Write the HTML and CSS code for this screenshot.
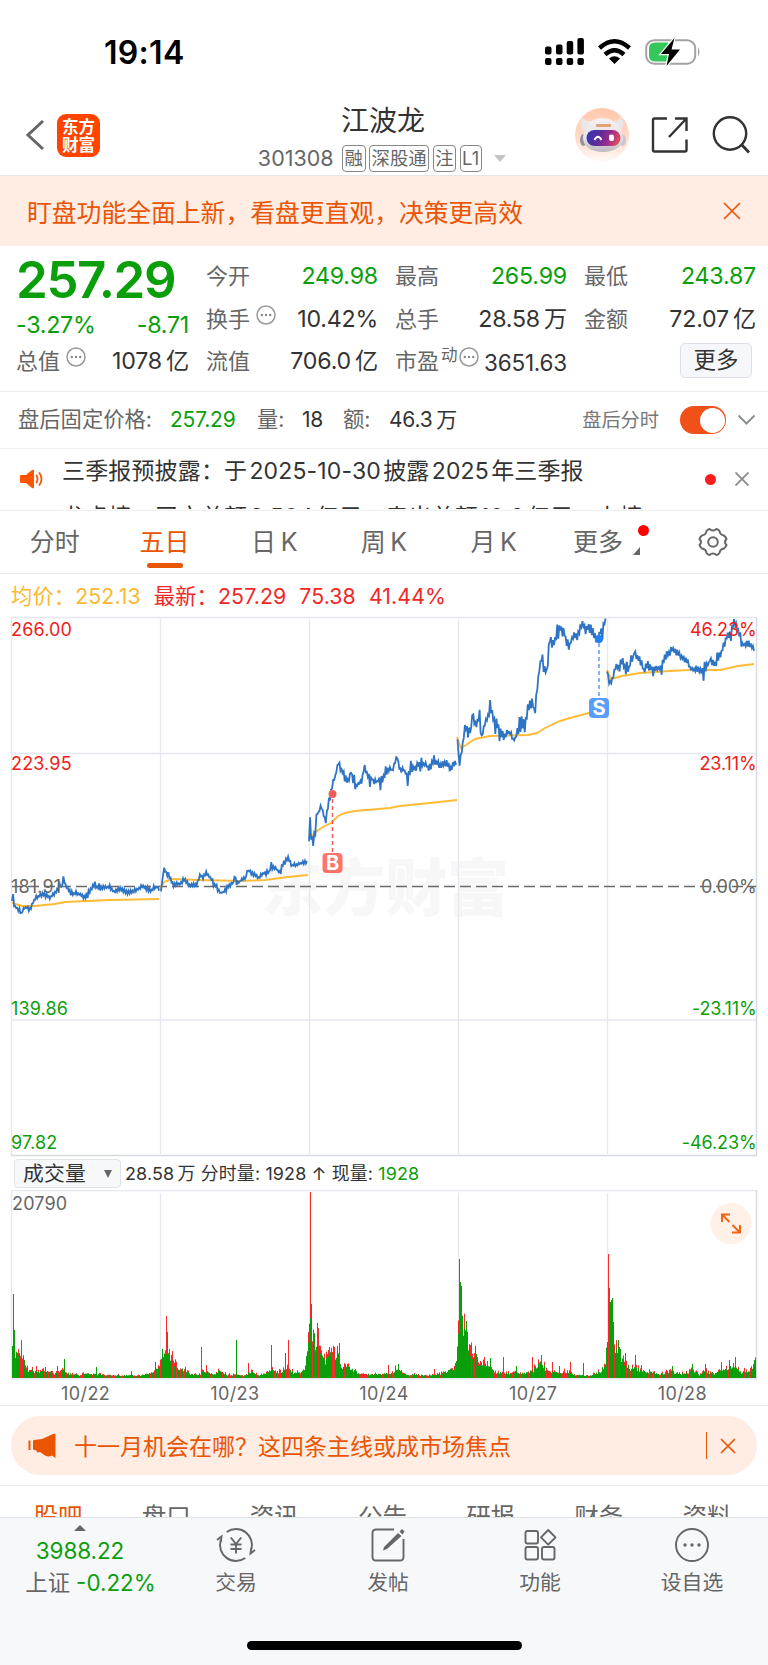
FILE: index.html
```html
<!DOCTYPE html>
<html lang="zh-CN">
<head>
    <meta charset="UTF-8">
    <meta name="viewport" content="width=device-width, initial-scale=1.0">
    <title>江波龙 301308</title>
    <link rel="stylesheet" href="styles.css">
</head>
<body>
    <div class="page">
        <div class="status-bar">
            <div class="clock">19:14</div>
            <svg class="status-icons" width="160" height="32" viewBox="542 36 160 32">
                <g fill="#000">
                    <rect x="545" y="46.500" width="6.500" height="8" rx="2"/>
                    <rect x="556" y="44.500" width="6.500" height="10" rx="2"/>
                    <rect x="566.700" y="41" width="6.500" height="13.500" rx="2"/>
                    <rect x="577.400" y="38" width="6.500" height="16.500" rx="2"/>
                    <rect x="545" y="58" width="6.500" height="7" rx="2"/>
                    <rect x="556" y="58" width="6.500" height="7" rx="2"/>
                    <rect x="566.700" y="58" width="6.500" height="7" rx="2"/>
                    <rect x="577.400" y="58" width="6.500" height="7" rx="2"/>
                    <path d="M614.500 64 L609 58.500 Q614.500 54 620 58.500 Z"/>
                </g>
                <g fill="none" stroke="#000" stroke-width="4.400">
                    <path d="M599.500 48 Q614.500 34.500 629.500 48"/>
                    <path d="M605 54.500 Q614.500 46 624 54.500"/>
                </g>
                <rect x="646.200" y="40.200" width="49" height="23.500" rx="8" fill="none" stroke="#a3a3a3" stroke-width="2"/>
                <path d="M698 47 Q701 51.500 698 57 Z" fill="#a3a3a3"/>
                <path d="M655 42.500 H668 V61.500 H655 Q649 61.500 649 55.500 V48.500 Q649 42.500 655 42.500 Z" fill="#34c759"/>
                <path d="M674.500 38 L661 54 H669 L666.500 66 L680 49.500 H671.500 Z" fill="#000" stroke="#fff" stroke-width="2.500" paint-order="stroke"/>
            </svg>
        </div>

        <div class="header">
            <div class="header-left">
                <svg class="back" width="20" height="32" viewBox="0 0 20 32"><path d="M18 2 L3 16 L18 30" fill="none" stroke="#666" stroke-width="3"/></svg>
                <div class="logo">东方<br>财富</div>
            </div>
            <div class="header-title">
                <div class="stock-name">江波龙</div>
                <div class="stock-code">
                    <span class="code">301308</span>
                    <span class="tag">融</span>
                    <span class="tag">深股通</span>
                    <span class="tag">注</span>
                    <span class="tag">L1</span>
                    <span class="drop"></span>
                </div>
            </div>
            <div class="header-right">
                <svg width="54" height="54" viewBox="0 0 54 54">
                    <defs>
                        <linearGradient id="halo" x1="0" y1="0" x2="0" y2="1"><stop offset="0" stop-color="#ffc8ac"/><stop offset="0.600" stop-color="#ffddcc"/><stop offset="1" stop-color="#fffaf8"/></linearGradient>
                        <linearGradient id="visor" x1="0" y1="0" x2="1" y2="0.200"><stop offset="0" stop-color="#3038b8"/><stop offset="0.450" stop-color="#5c2c98"/><stop offset="0.750" stop-color="#a02c8c"/><stop offset="1" stop-color="#d84860"/></linearGradient>
                        <linearGradient id="shell" x1="0" y1="0" x2="0" y2="1"><stop offset="0" stop-color="#f4f1f2"/><stop offset="0.600" stop-color="#e6e2e6"/><stop offset="1" stop-color="#bcb8c0"/></linearGradient>
                    </defs>
                    <circle cx="27" cy="27" r="27" fill="url(#halo)"/>
                    <path d="M7 9 Q4 15 7 20 L10 24 L18 13 Q10 14 7 9 Z M46 9 Q50 15 47 20 L44 24 L36 13 Q44 14 46 9 Z" fill="#ebe7e8"/>
                    <ellipse cx="8.500" cy="32" rx="3.500" ry="6" fill="#96929c"/>
                    <ellipse cx="47.500" cy="32" rx="3.500" ry="6" fill="#ccc6cc"/>
                    <path d="M27 10 C39 10 47 19 48 30 C48 39 38 44 28 44 C17 44 8 39 8 30 C9 19 15 10 27 10 Z" fill="url(#shell)"/>
                    <rect x="21" y="16" width="15" height="3" rx="1" fill="#e0a474"/>
                    <rect x="11.500" y="22" width="34" height="16" rx="8" fill="url(#visor)"/>
                    <path d="M19.500 32 Q23 25.500 26.500 32" fill="none" stroke="#fff" stroke-width="1.800"/>
                    <rect x="34" y="26.500" width="5" height="6.500" rx="2" fill="#fff"/>
                </svg>
                <svg class="share" width="40" height="40" viewBox="0 0 40 40"><path d="M17 3.500 H4.500 Q3 3.500 3 5 V35 Q3 36.500 4.500 36.500 H35 Q36.500 36.500 36.500 35 V24.500 M25 3.500 H36.500 V16 M36 4 L19 22" fill="none" stroke="#333" stroke-width="2.400"/></svg>
                <svg class="search" width="40" height="40" viewBox="0 0 40 40"><circle cx="19" cy="18.500" r="16.200" fill="none" stroke="#333" stroke-width="2.400"/><path d="M30.500 29.500 L38 37.500" stroke="#333" stroke-width="2.800"/></svg>
            </div>
        </div>

        <div class="banner">
            <span>盯盘功能全面上新，看盘更直观，决策更高效</span>
            <svg width="18" height="18" viewBox="0 0 18 18"><path d="M1 1 L17 17 M17 1 L1 17" stroke="#ea5504" stroke-width="1.700"/></svg>
        </div>

        <div class="quote">
            <div class="quote-col first">
                <div class="price">257.29</div>
                <div class="change"><span>-3.27%</span><span>-8.71</span></div>
                <div class="cell"><span class="label">总值<svg class="dots" width="20" height="20" viewBox="0 0 20 20"><use href="#more"/></svg></span><span class="value">1078&thinsp;亿</span></div>
            </div>
            <div class="quote-col">
                <div class="cell"><span class="label">今开</span><span class="value green">249.98</span></div>
                <div class="cell"><span class="label">换手<svg class="dots" width="20" height="20" viewBox="0 0 20 20"><use href="#more"/></svg></span><span class="value">10.42%</span></div>
                <div class="cell"><span class="label">流值</span><span class="value">706.0&thinsp;亿</span></div>
            </div>
            <div class="quote-col">
                <div class="cell"><span class="label">最高</span><span class="value green">265.99</span></div>
                <div class="cell"><span class="label">总手</span><span class="value">28.58&thinsp;万</span></div>
                <div class="cell"><span class="label">市盈<sup>动</sup><svg class="dots tight" width="20" height="20" viewBox="0 0 20 20"><use href="#more"/></svg></span><span class="value small">3651.63</span></div>
            </div>
            <div class="quote-col">
                <div class="cell"><span class="label">最低</span><span class="value green">243.87</span></div>
                <div class="cell"><span class="label">金额</span><span class="value">72.07&thinsp;亿</span></div>
                <div class="cell end"><span class="more-btn">更多</span></div>
            </div>
        </div>

        <div class="after-hours">
            <span class="ah-label price-label">盘后固定价格:</span>
            <span class="ah-value ah-price">257.29</span>
            <span class="ah-label ah-vol">量:</span>
            <span class="ah-value ah-num">18</span>
            <span class="ah-label ah-amt">额:</span>
            <span class="ah-value">46.3&thinsp;万</span>
            <span class="ah-switch">盘后分时</span>
            <span class="toggle"></span>
            <svg class="chevron" width="19" height="12" viewBox="0 0 19 12"><path d="M1.500 1.500 L9.500 9.500 L17.500 1.500" fill="none" stroke="#8c9097" stroke-width="2"/></svg>
        </div>

        <div class="news">
            <svg class="speaker" width="24" height="20" viewBox="0 0 24 20">
                <path d="M1 6 H6 L12 1 Q14 0 14 2 V18 Q14 20 12 19 L6 14 H1 Q0 14 0 13 V7 Q0 6 1 6 Z" fill="#ff5500"/>
                <path d="M16.500 6.500 Q18.500 10 16.500 13.500 M19.500 4 Q23.500 10 19.500 16" fill="none" stroke="#ff5500" stroke-width="1.800" stroke-linecap="round"/>
            </svg>
            <div class="news-list">
                <div>三季报预披露：于&hairsp;2025-10-30&hairsp;披露&hairsp;2025&hairsp;年三季报</div>
                <div class="next">龙虎榜：买方总额&hairsp;8.504&hairsp;亿元，卖出总额&hairsp;10.9&hairsp;亿元，上榜</div>
            </div>
            <span class="red-dot"></span>
            <svg class="news-close" width="14" height="14" viewBox="0 0 14 14"><path d="M0.500 0.500 L13.500 13.500 M13.500 0.500 L0.500 13.500" stroke="#8a8a8a" stroke-width="1.800"/></svg>
        </div>

        <div class="tabs">
            <div class="tab">分时</div>
            <div class="tab active">五日</div>
            <div class="tab">日&thinsp;K</div>
            <div class="tab">周&thinsp;K</div>
            <div class="tab">月&thinsp;K</div>
            <div class="tab more-tab">更多</div>
            <div class="tab">
                <svg width="30" height="30" viewBox="0 0 30 30">
                    <path d="M11.500 2 Q15 5 18.500 2 Q21 3 21.500 4 Q22 8 26 8.500 Q28 10.500 28.500 12 Q25.500 15 28.500 18 Q28 20 26 21.500 Q22 22 21.500 26 Q20.500 27.500 18.500 28 Q15 25 11.500 28 Q9.500 27.500 8.500 26 Q8 22 4 21.500 Q2 20 1.500 18 Q4.500 15 1.500 12 Q2 10 4 8.500 Q8 8 8.500 4 Q9.500 2.500 11.500 2 Z" fill="none" stroke="#666" stroke-width="2" stroke-linejoin="round"/>
                    <circle cx="15" cy="15" r="4.800" fill="none" stroke="#666" stroke-width="2"/>
                </svg>
            </div>
        </div>

        <div class="legend">
            <span class="avg">均价：252.13</span>
            <span>最新：257.29</span>
            <span>75.38</span>
            <span>41.44%</span>
        </div>

        <svg class="chart" id="priceChart" width="768" height="541" viewBox="0 616 768 541">
            <g class="watermark"><text x="261" y="911" textLength="248">东方财富</text></g>
            <g class="grid">
                <path d="M11.500 617.500 V1155 M11 617.500 H757 M11 753.500 H757 M11 1020 H757 M160.500 619 V1154 M309.500 619 V1154 M458.500 619 V1154 M607.500 619 V1154"/>
                <path class="edge" d="M756.500 617 V1156 M11 1155.500 H757"/>
            </g>
            <path class="zero" d="M12 886.500 H756"/>
            <g id="lines"></g>
            <g class="mark-b">
                <path d="M332.500 799 V852"/><circle cx="332.500" cy="794" r="4"/>
                <rect x="322.500" y="853" width="20" height="20" rx="4"/>
                <text x="332.500" y="870">B</text>
            </g>
            <g class="mark-s">
                <path d="M599 643 V698"/><circle cx="599" cy="639" r="4"/>
                <rect x="589" y="698" width="20" height="20" rx="4"/>
                <text x="599" y="715">S</text>
            </g>
            <g class="axis">
                <text class="up" x="11" y="635.500">266.00</text>
                <text class="up" x="11" y="769.500">223.95</text>
                <text class="mid" x="11" y="892.500">181.91</text>
                <text class="down" x="11" y="1014.500">139.86</text>
                <text class="down" x="11" y="1149">97.82</text>
                <text class="up right" x="756.500" y="635.500">46.23%</text>
                <text class="up right" x="756.500" y="769.500">23.11%</text>
                <text class="mid right" x="756.500" y="892.500">0.00%</text>
                <text class="down right" x="756.500" y="1014.500">-23.11%</text>
                <text class="down right" x="756.500" y="1149">-46.23%</text>
            </g>
        </svg>

        <div class="volume-head">
            <span class="indicator">成交量<i></i></span>
            <span>28.58&thinsp;万 分时量: 1928 ↑ 现量: <b>1928</b></span>
        </div>

        <svg class="chart" id="volumeChart" width="768" height="190" viewBox="0 1190 768 190">
            <g class="grid">
                <path d="M11.500 1190.500 V1379 M11 1190.500 H757 M160.500 1193 V1378 M309.500 1193 V1378 M458.500 1193 V1378 M607.500 1193 V1378 M11 1379 H757"/>
                <path class="edge" d="M756.500 1190 V1379"/>
            </g>
            <g id="bars"></g>
            <g class="axis"><text class="mid" x="12" y="1210">20790</text></g>
            <circle cx="731" cy="1223.500" r="20.500" fill="#fff0e8"/>
            <path d="M722 1222 V1214.500 H730 M722.500 1215 L729.500 1222 M740 1225 V1232.500 H732 M739.500 1232 L732.500 1225" fill="none" stroke="#f06414" stroke-width="2"/>
        </svg>

        <div class="dates">
            <span>10/22</span><span>10/23</span><span>10/24</span><span>10/27</span><span>10/28</span>
        </div>

        <div class="notice-wrap">
            <div class="notice">
                <svg class="horn" width="29" height="26" viewBox="0 0 29 26">
                    <path d="M1.500 7.500 V17" stroke="#ea5504" stroke-width="2"/>
                    <path d="M6 7 L14 6 L25 1 Q27.500 0 27.500 2 V25 L24 22.500 Q21 24.500 17 22.500 L12 19 L9 19.500 L8.500 17.500 L6 17 Q5 16.500 5 15.500 V8.500 Q5 7.200 6 7 Z" fill="#ea5504"/>
                </svg>
                <span class="notice-text">十一月机会在哪？这四条主线或成市场焦点</span>
                <span class="notice-close">
                    <svg width="16" height="16" viewBox="0 0 16 16"><path d="M1 1 L15 15 M15 1 L1 15" stroke="#ea5504" stroke-width="1.700"/></svg>
                </span>
            </div>
        </div>

        <div class="sections">
            <span class="on">股吧</span><span>盘口</span><span>资讯</span><span>公告</span><span>研报</span><span>财务</span><span>资料</span>
        </div>

        <div class="bottom-bar">
            <div class="index-box">
                <i></i>
                <div class="index-num">3988.22</div>
                <div class="index-chg">上证<span>-0.22%</span></div>
            </div>
            <div class="nav-item">
                <svg width="40" height="36" viewBox="0 0 40 36"><g fill="none" stroke="#666" stroke-width="1.900">
                    <path d="M10.700 5 A16 16 0 0 1 35.200 23 M29.300 31 A16 16 0 0 1 4.800 13"/>
                    <path d="M1 13 L5.500 9.500 L4.800 15 M39 23 L34.500 26.500 L35.200 21"/>
                    <path d="M14.800 10.500 L20 17 L25.200 10.500 M20 17 V26.500 M14.500 17.500 H25.500 M14.500 22 H25.500"/></g></svg>
                <span>交易</span>
            </div>
            <div class="nav-item">
                <svg width="36" height="36" viewBox="0 0 36 36"><path d="M24 2.500 H6 Q2.500 2.500 2.500 6 V30 Q2.500 33.500 6 33.500 H30 Q33.500 33.500 33.500 30 V12" fill="none" stroke="#666" stroke-width="1.900"/><path d="M28 6 L31.500 9 L17 22 L13 23.500 L14 20 Z M29.500 4.500 L32 2 L34.500 4.500 L32.500 7.500 Z" fill="#666"/></svg>
                <span>发帖</span>
            </div>
            <div class="nav-item">
                <svg width="34" height="36" viewBox="0 0 34 36"><g fill="none" stroke="#666" stroke-width="1.900"><rect x="2.500" y="4" width="12.500" height="12.500" rx="2"/><rect x="2.500" y="20" width="12.500" height="12.500" rx="2"/><rect x="19" y="20" width="12.500" height="12.500" rx="2"/><path d="M25.200 3 L32.500 10.300 L25.200 17.600 L18 10.300 Z" stroke-linejoin="round"/></g></svg>
                <span>功能</span>
            </div>
            <div class="nav-item">
                <svg width="36" height="36" viewBox="0 0 36 36"><circle cx="18" cy="18" r="16" fill="none" stroke="#666" stroke-width="1.900"/><g fill="#666"><circle cx="11" cy="18" r="1.700"/><circle cx="18" cy="18" r="1.700"/><circle cx="25" cy="18" r="1.700"/></g></svg>
                <span>设自选</span>
            </div>
            <div class="home-indicator"></div>
        </div>
    </div>

    <svg width="0" height="0" class="defs">
        <symbol id="more" viewBox="0 0 20 20"><circle cx="10" cy="10" r="9" fill="none" stroke="#999" stroke-width="1.500"/><circle cx="5.800" cy="10" r="1.200" fill="#888"/><circle cx="10" cy="10" r="1.200" fill="#888"/><circle cx="14.200" cy="10" r="1.200" fill="#888"/></symbol>
    </svg>
    <script src="chart.js"></script>
</body>
</html>
```
FILE: styles.css
```css
* {
    box-sizing: border-box;
}

body {
    margin: 0;
    background: #fff;
    color: #333;
    font-family: Inter, "Noto Sans CJK SC", sans-serif;
    line-height: 1.4;
}

svg {
    display: block;
    flex: none;
}

.defs {
    position: absolute;
}

.page {
    width: 768px;
    height: 1665px;
    overflow: hidden;
    display: flex;
    flex-direction: column;
}

.page > * {
    flex: none;
}

/* status bar */
.status-bar {
    height: 100px;
    padding: 4px 66px 0 104px;
    display: flex;
    align-items: center;
    justify-content: space-between;
}

.clock {
    padding-top: 2px;
    font-size: 32px;
    font-weight: 600;
    color: #000;
    letter-spacing: 0.3px;
}

/* header */
.header {
    height: 76px;
    border-bottom: 1px solid #e4e7ea;
    display: grid;
    grid-template-columns: 240px 1fr 240px;
}

.header-left {
    display: flex;
    align-items: center;
    padding: 0 0 5px 25px;
}

.logo {
    width: 43px;
    height: 43px;
    margin-left: 12px;
    border-radius: 9px;
    background: #ff4400;
    color: #fff;
    font-size: 16.5px;
    font-weight: 600;
    line-height: 18px;
    padding-top: 4px;
    text-align: center;
}

.header-title {
    display: flex;
    flex-direction: column;
    align-items: center;
}

.stock-name {
    margin: 3px 2px 0 0;
    font-size: 28px;
    line-height: 36px;
}

.stock-code {
    display: flex;
    align-items: center;
    gap: 3.5px;
    height: 28px;
    margin: 5px 4px 0 0;
    font-size: 21.5px;
    color: #666;
}

.code {
    margin-right: 5px;
}

.tag {
    height: 27px;
    padding: 0 1.5px;
    border: 1.500px solid #888;
    border-radius: 4px;
    font-size: 18.4px;
    line-height: 24px;
}

.drop {
    margin: 1px 0 0 9px;
    border: 6.500px solid transparent;
    border-top: 7px solid #c4c4c4;
    border-bottom: 0;
}

.header-right {
    display: flex;
    align-items: center;
    padding: 0 0 6px 47px;
}

.share {
    margin-left: 21px;
}

.search {
    margin-left: 21px;
}

/* orange banner */
.banner {
    height: 70px;
    padding: 0 27px 0 27px;
    background: #ffede4;
    color: #ea5504;
    font-size: 24.8px;
    display: flex;
    align-items: center;
    justify-content: space-between;
}

.banner span {
    padding-top: 5px;
}

/* quote block */
.quote {
    height: 146px;
    padding: 9px 12px 0 16px;
    border-bottom: 1px solid #e9ebee;
    display: grid;
    grid-template-columns: 173px 172px 172px 172px;
    column-gap: 17px;
}

.quote-col {
    display: flex;
    flex-direction: column;
}

.cell {
    height: 42.7px;
    display: flex;
    align-items: center;
    justify-content: space-between;
    white-space: nowrap;
}

.cell.end {
    justify-content: flex-end;
}

.price {
    height: 51px;
    line-height: 50px;
    font-size: 51px;
    font-weight: 600;
    color: #0a9f0a;
    letter-spacing: -1.4px;
}

.change {
    height: 34.4px;
    padding-top: 5px;
    display: flex;
    align-items: center;
    justify-content: space-between;
    font-size: 23.3px;
    letter-spacing: -0.3px;
    color: #0a9f0a;
}

.label {
    display: flex;
    align-items: center;
    font-size: 22px;
    color: #666;
}

.label sup {
    font-size: 16.5px;
    line-height: 16px;
    margin: -14px 0 0 2px;
}

.dots {
    margin: -9px 0 0 6px;
}

.dots.tight {
    margin-left: 1px;
}

.value {
    font-size: 23.2px;
    letter-spacing: -0.2px;
    color: #333;
}

.value.green {
    color: #0a9f0a;
}

.value.small {
    font-size: 22.5px;
    padding-top: 2px;
}

.more-btn {
    width: 72px;
    height: 35px;
    margin: -2px 4px 0 0;
    border: 1.500px solid #dcdfe5;
    border-radius: 5px;
    background: #f6f7fa;
    font-size: 22.5px;
    line-height: 32px;
    text-align: center;
}

/* after-hours fixed price */
.after-hours {
    height: 57px;
    padding: 0 12px 0 18px;
    border-bottom: 1px solid #f0f1f3;
    display: flex;
    align-items: center;
    white-space: nowrap;
}

.ah-label {
    font-size: 21.3px;
    color: #666;
}

.ah-value {
    font-size: 21px;
    letter-spacing: -0.2px;
}

.price-label {
    width: 152px;
}

.ah-price {
    width: 87px;
    color: #0a9f0a;
}

.ah-vol {
    width: 45px;
}

.ah-num {
    width: 41px;
}

.ah-amt {
    width: 46px;
}

.ah-switch {
    margin-left: auto;
    font-size: 19.2px;
    color: #777;
}

.toggle {
    width: 46px;
    height: 28px;
    margin: 0 11px 0 21px;
    border-radius: 14px;
    background: #f15019;
    display: flex;
    align-items: center;
    justify-content: flex-end;
    padding: 1px;
}

.toggle::after {
    content: "";
    width: 25px;
    height: 25px;
    border-radius: 50%;
    background: #fff;
}

/* scrolling news */
.news {
    height: 62px;
    padding: 0 19px 1px 20px;
    border-bottom: 1px solid #eef0f2;
    display: flex;
    align-items: center;
}

.news-list {
    flex: 1;
    height: 60px;
    margin-left: 18px;
    overflow: hidden;
    font-size: 23px;
    letter-spacing: 0.15px;
    line-height: 44px;
    white-space: nowrap;
}

.next {
    margin-top: 2px;
}

.red-dot {
    width: 11px;
    height: 11px;
    border-radius: 50%;
    background: #fa1e1e;
    margin-right: 19px;
}

/* period tabs */
.tabs {
    height: 63px;
    border-bottom: 1px solid #eef0f2;
    display: grid;
    grid-template-columns: repeat(7, 1fr);
}

.tab {
    position: relative;
    display: flex;
    align-items: center;
    justify-content: center;
    font-size: 25px;
    color: #666;
}

.tab.active {
    color: #ea5504;
}

.tab.active::after {
    content: "";
    position: absolute;
    bottom: 5px;
    width: 36px;
    height: 5px;
    border-radius: 3px;
    background: #ea5504;
}

.more-tab {
    padding-right: 11px;
}

.more-tab::before {
    content: "";
    position: absolute;
    left: 89px;
    top: 14px;
    width: 11px;
    height: 11px;
    border-radius: 50%;
    background: #f00;
}

.more-tab::after {
    content: "";
    position: absolute;
    left: 84px;
    top: 36px;
    border-left: 7px solid transparent;
    border-bottom: 8px solid #666;
}

/* chart */
.legend {
    height: 42px;
    padding: 3px 0 0 11px;
    display: flex;
    align-items: center;
    gap: 13px;
    font-size: 21.3px;
    letter-spacing: 0.1px;
    color: #f02828;
}

.legend .avg {
    color: #fbb831;
}

.grid path {
    fill: none;
    stroke: #e6e8f0;
    stroke-width: 1.4;
}

.grid .edge {
    stroke: #d5d9e0;
}

.zero {
    fill: none;
    stroke: #6a6a6a;
    stroke-width: 1.3;
    stroke-dasharray: 11 5;
}

.watermark {
    font-family: "Noto Sans CJK SC", sans-serif;
    font-size: 62px;
    font-weight: 900;
    fill: #f7f7f7;
}

.price-line {
    fill: none;
    stroke: #2f74c4;
    stroke-width: 1.8;
}

.avg-line {
    fill: none;
    stroke: #ffbb35;
    stroke-width: 1.9;
}

.axis {
    font-size: 18px;
    letter-spacing: 0.15px;
}

.axis .right {
    text-anchor: end;
    letter-spacing: -0.1px;
}

.up {
    fill: #f02020;
}

.down {
    fill: #0a9f0a;
}

.mid {
    fill: #666;
}

.mark-b {
    fill: #ff7468;
}

.mark-s {
    fill: #589dfb;
}

.mark-b circle {
    fill: #f06058;
}

.mark-s circle {
    fill: #2080f8;
}

.mark-b path,
.mark-s path {
    stroke: #f25a50;
    stroke-width: 1.4;
    stroke-dasharray: 4 3;
}

.mark-s path {
    stroke: #4c94f6;
}

.mark-b text,
.mark-s text {
    fill: #fff;
    font-size: 20px;
    font-weight: 700;
    text-anchor: middle;
}

.volume-head {
    height: 33px;
    padding: 0 0 0 14px;
    display: flex;
    align-items: center;
    font-size: 17.9px;
    letter-spacing: 0.15px;
}

.volume-head b {
    font-weight: 400;
    color: #0a9f0a;
}

.indicator {
    width: 107px;
    height: 29px;
    margin-right: 4px;
    padding: 0 8px;
    border: 1px solid #e1e3e9;
    border-radius: 4px;
    background: #f7f8fa;
    display: flex;
    align-items: center;
    justify-content: space-between;
    font-size: 20.8px;
}

.indicator i {
    border: 4.500px solid transparent;
    border-top: 8px solid #666;
    border-bottom: 0;
}

.dates {
    height: 26px;
    padding: 0 11px;
    border-bottom: 1px solid #e9ebee;
    display: grid;
    grid-template-columns: repeat(5, 1fr);
    font-size: 18px;
    letter-spacing: 0.4px;
    line-height: 27px;
    color: #666;
    text-align: center;
}

/* notice pill */
.notice-wrap {
    height: 80px;
    padding: 10px 11px;
    border-bottom: 1px solid #ebedf0;
}

.notice {
    height: 59px;
    padding: 0 21px 0 17px;
    border-radius: 30px;
    background: #ffede4;
    color: #ea5504;
    font-size: 23px;
    display: flex;
    align-items: center;
}

.notice-text {
    margin-left: 17px;
    padding-top: 4px;
}

.notice-close {
    margin-left: auto;
    height: 27px;
    padding-left: 13px;
    border-left: 1.500px solid #ea5504;
    display: flex;
    align-items: center;
}

/* content sections, cut off by the bottom bar */
.sections {
    height: 31px;
    padding: 13px 7px 0 4px;
    overflow: hidden;
    display: grid;
    grid-template-columns: repeat(7, 1fr);
    font-size: 24.5px;
    line-height: 36px;
    text-align: center;
    color: #666;
}

.sections .on {
    color: #ea5504;
}

/* bottom bar */
.bottom-bar {
    position: relative;
    height: 148px;
    padding: 0 0 0 8px;
    border-top: 1px solid #dfe2e6;
    background: #f7f8fa;
    display: grid;
    grid-template-columns: repeat(5, 152px);
}

.index-box,
.nav-item {
    display: flex;
    flex-direction: column;
    align-items: center;
    font-size: 20.8px;
    line-height: 28px;
    color: #666;
}

.index-box i {
    margin: 7px 8px 0 0;
    border: 6px solid transparent;
    border-top: 0;
    border-bottom: 6px solid #666;
}

.index-num {
    margin: 6px 8px 0 0;
    font-size: 22.5px;
    letter-spacing: -0.1px;
    color: #0a9f0a;
}

.index-chg {
    margin: 4px 0 0 13px;
    font-size: 22.4px;
    white-space: nowrap;
}

.index-chg span {
    margin-left: 6px;
    color: #0a9f0a;
}

.nav-item svg {
    margin: 9px 0 6px;
}

.home-indicator {
    position: absolute;
    left: 247px;
    bottom: 15px;
    width: 275px;
    height: 9px;
    border-radius: 5px;
    background: #000;
}
```
FILE: chart.js
```js
// [x, y] turning points of each trading day
const prices = [
    [12,900, 13,895, 14,905, 16,908, 19,910, 21,914, 24,908, 27,907, 29,911, 32,905, 35,898, 40,896, 45,893, 50,898, 56,892, 60,886, 62,888, 63,877, 66,886, 72,893, 78,894, 85,897, 89,892, 94,885, 100,889, 105,887, 110,888, 115,892, 120,889, 128,893, 135,890, 142,886, 147,889, 152,890, 157,887, 160,892],
    [161,890, 164,868, 167,875, 170,877, 173,885, 179,884, 184,879, 190,886, 197,884, 200,874, 203,878, 206,873, 211,879, 216,887, 220,893, 224,892, 229,885, 234,883, 235,869, 236,885, 241,880, 246,878, 247,870, 253,874, 258,878, 263,873, 269,872, 272,865, 277,870, 281,872, 283,863, 288,858, 292,866, 298,864, 303,863, 308,861],
    [309,838, 310,828, 311,830, 313,845, 315,832, 316,815, 319,812, 321,806, 324,815, 326,822, 328,805, 330,800, 332,788, 335,777, 338,763, 341,768, 344,776, 348,783, 351,772, 355,786, 358,784, 362,780, 364,768, 370,777, 375,782, 380,781, 385,775, 388,768, 392,770, 395,763, 397,755, 399,768, 404,770, 408,776, 411,770, 416,767, 421,760, 425,766, 430,768, 433,760, 438,764, 443,765, 447,763, 450,768, 454,765, 457,760],
    [457.5,738, 459,766, 462,750, 465,727, 468,733, 471,732, 472,712, 476,728, 479,716, 482,738, 485,722, 491,711, 495,720, 500,730, 503,737, 507,730, 511,735, 514,740, 519,730, 524,724, 527,714, 531,698, 535,712, 538,680, 541,657, 544,670, 547,672, 550,640, 554,645, 558,625, 563,632, 566,638, 568,652, 573,635, 578,638, 581,621, 585,630, 590,628, 594,634, 597,640, 602,628, 606,620],
    [607,670, 609,683, 612,680, 615,668, 619,668, 622,660, 627,673, 632,660, 635,651, 640,660, 644,670, 648,665, 655,669, 660,668, 665,657, 670,652, 673,648, 678,653, 683,658, 688,663, 692,671, 696,668, 700,670, 704,673, 710,660, 715,664, 720,655, 726,640, 731,630, 734,619, 738,632, 742,645, 748,644, 754,647]
];

const averages = [
    [12,903, 22,906, 35,906, 55,904, 65,902, 110,900, 159,899],
    [160,889, 164,882, 172,879, 200,880, 240,881, 265,880, 288,877, 308,875],
    [309,835, 312,836, 317,831, 323,827, 331,823, 338,816, 345,813, 355,811, 390,808, 400,806, 430,803, 457,800],
    [457,737, 461,748, 466,745, 475,739, 490,736, 528,735, 537,733, 545,728, 560,721, 570,718, 585,714, 605,709],
    [607,670, 611,679, 622,676, 640,673, 670,671, 690,670, 720,670, 738,666, 754,664]
];

// how much the price jitters on each day
const jitter = [2.8, 2.8, 5.5, 7, 5.5];

// [x, height] outline of the volume bars
const volumes = [
    12,45, 14,42, 16,30, 20,25, 24,22, 27,10, 35,8, 45,8, 55,5, 62,9, 67,6, 80,3, 88,6, 96,4, 120,3, 140,3, 150,5, 155,10, 160,16,
    164,30, 170,26, 175,16, 180,9, 185,10, 190,5, 198,3, 204,8, 215,4, 221,9, 226,4, 245,3, 252,8, 258,3, 265,6, 274,9, 280,7, 288,10, 295,5, 305,9, 308,38,
    311,72, 313,58, 316,44, 320,38, 325,18, 330,28, 338,26, 342,12, 347,14, 355,8, 360,5, 370,4, 380,4, 390,6, 398,11, 405,4, 430,3, 445,6, 455,12, 458,40,
    461,80, 463,55, 468,38, 472,26, 475,28, 480,14, 490,14, 495,7, 508,5, 516,8, 523,5, 532,8, 540,18, 548,8, 560,5, 567,8, 575,3, 590,3, 600,7, 606,18,
    609,88, 613,78, 615,34, 620,24, 626,14, 632,12, 642,8, 650,7, 660,4, 672,8, 680,4, 692,8, 700,4, 705,8, 715,5, 728,12, 735,12, 740,7, 748,8, 755,16
];

// single minutes that stand out: x, height, colour
const spikes = [
    [12, 32, 'g'], [13, 84, 'g'], [14, 48, 'g'], [21, 38, 'r'], [64.5, 19, 'g'], [36, 12, 'r'], [45, 11, 'r'], [57, 12, 'r'], [96, 11, 'g'], [131, 7, 'r'],
    [155, 16, 'g'], [162, 29, 'g'], [166, 62, 'r'], [167, 46, 'g'], [172, 27, 'r'], [175, 18, 'g'], [201, 31, 'r'], [206, 13, 'r'],
    [236.5, 38, 'g'], [248, 15, 'r'], [271, 33, 'r'], [285, 25, 'g'], [288, 38, 'r'], [310.5, 186, 'r'], [311.7, 74, 'g'],
    [317, 55, 'r'], [329, 31, 'r'], [334, 31, 'r'], [339, 35, 'r'], [388, 13, 'r'], [398, 14, 'g'], [434, 9, 'r'],
    [459, 119, 'g'], [460, 96, 'g'], [461, 92, 'g'], [462.5, 55, 'r'], [466, 57, 'g'], [467, 46, 'g'], [470, 33, 'r'], [475, 32, 'g'], [484, 21, 'r'],
    [490, 20, 'g'], [503, 21, 'r'], [516, 12, 'g'], [532, 21, 'r'], [541, 23, 'r'], [552, 16, 'r'], [559, 12, 'r'], [570, 16, 'r'],
    [583, 15, 'g'], [608, 124, 'r'], [609, 90, 'g'], [610, 76, 'g'], [611, 78, 'g'], [612, 80, 'g'], [613, 56, 'g'], [618, 38, 'g'], [620, 29, 'g'], [625, 25, 'g'],
    [635, 23, 'r'], [641, 13, 'g'], [672, 12, 'g'], [692, 14, 'g'], [705, 14, 'g'], [721, 16, 'r'], [729, 18, 'g'], [735, 21, 'r'], [754, 18, 'g']
];

let seed = 20251028;
function rand() {
    seed = (seed * 16807) % 2147483647;
    return seed / 2147483647;
}

function valueAt(points, x) {
    for (let i = 0; i < points.length - 3; i += 2) {
        if (x <= points[i + 2]) {
            const t = (x - points[i]) / (points[i + 2] - points[i]);
            return points[i + 1] + t * (points[i + 3] - points[i + 1]);
        }
    }
    return points[points.length - 1];
}

function addPath(parent, className, d) {
    const path = document.createElementNS('http://www.w3.org/2000/svg', 'path');
    path.setAttribute('class', className);
    path.setAttribute('d', d);
    parent.appendChild(path);
    return path;
}

function drawLines() {
    const group = document.getElementById('lines');
    averages.forEach(day => {
        let d = '';
        for (let i = 0; i < day.length; i += 2) {
            d += (i ? 'L' : 'M') + day[i] + ' ' + day[i + 1];
        }
        addPath(group, 'avg-line', d);
    });
    prices.forEach((day, n) => {
        const end = day[day.length - 2];
        let d = '';
        let up = 1;
        for (let x = day[0]; x <= end; x += 1.05) {
            const size = jitter[n] * (rand() < 0.14 ? 2 : 0.75);
            const y = Math.max(618.5, valueAt(day, x) + up * rand() * size);
            d += (d ? 'L' : 'M') + x.toFixed(1) + ' ' + y.toFixed(1);
            up = -up;
        }
        addPath(group, 'price-line', d);
    });
}

function drawBars() {
    const group = document.getElementById('bars');
    const base = 1378;
    let red = '';
    let green = '';
    for (let x = 12.5; x < 756; x += 1) {
        // cap the outline beside the opening spikes
        const h = Math.min(76, Math.max(1.5, valueAt(volumes, x) * (0.65 + rand() * 0.4)));
        red += `M${x} ${base}v${-(h * (h < 50 && rand() < 0.3 ? 1.3 : 0.9)).toFixed(1)}`;
        if (rand() < 0.78) {
            green += `M${x} ${base}v${-h.toFixed(1)}`;
        }
    }
    spikes.forEach(([x, h, colour]) => {
        const bar = `M${Math.floor(x) + 0.5} ${base}v${-h}`;
        if (colour === 'r') red += bar;
        else green += bar;
    });
    addPath(group, 'bar', red).setAttribute('stroke', '#f52b2b');
    addPath(group, 'bar', green).setAttribute('stroke', '#0a9f0a');
}

drawLines();
drawBars();
```
